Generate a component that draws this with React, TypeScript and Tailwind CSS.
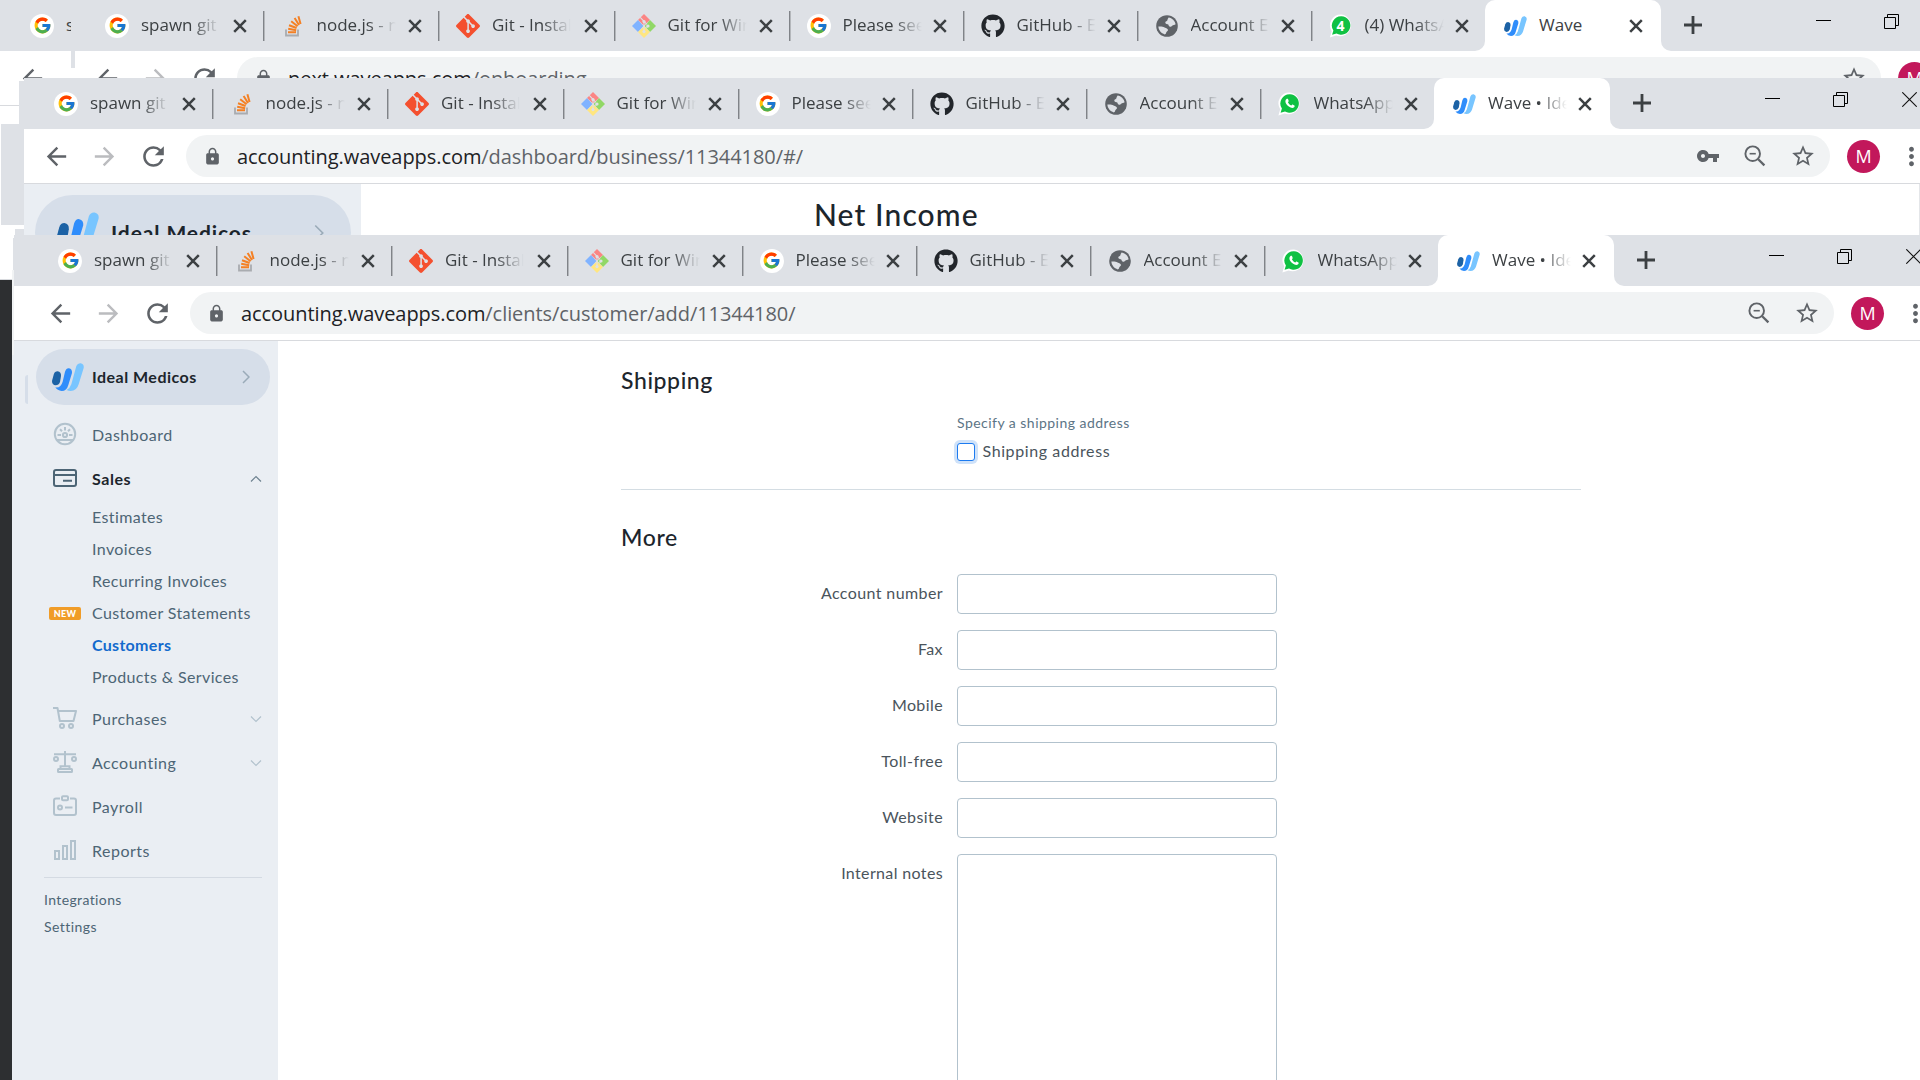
import React from 'react';
import { FcGoogle } from 'react-icons/fc';
import { FaGithub } from 'react-icons/fa';
import { SiGit } from 'react-icons/si';
import {
  MdArrowBack, MdArrowForward, MdLock, MdMoreVert, MdRefresh, MdStarBorder, MdVpnKey,
} from 'react-icons/md';

/* ---------- favicons ---------- */

const GoogleIcon = () => (
  <span className="flex size-6 items-center justify-center rounded-full bg-white"><FcGoogle size={19} /></span>
);

const StackIcon = () => (
  <svg width="18" height="22" viewBox="0 0 18 22" fill="none">
    <path d="M2 14.5V20.5H14V14.5" stroke="#a9acb0" strokeWidth="1.8" />
    <g stroke="#f48024" strokeWidth="2">
      <path d="M4 17.2H12M4.2 13.8L12.2 15.2M5 10.2L12.6 13M7.2 6.2L13.6 11.2M10.6 3L15 10M14.4 1.2L16.6 9" />
    </g>
  </svg>
);

const GitIcon = () => <SiGit size={24} color="#f4502f" />;

const GitWinIcon = () => (
  <svg width="24" height="24" viewBox="0 0 24 24">
    <path d="M12 0L18 6L12 11.4L6 6Z" fill="#fb8584" />
    <path d="M18 6L24 12L18 18L12.6 12Z" fill="#91d866" />
    <path d="M6 6L11.4 12L6 18L0 12Z" fill="#80b3ff" />
    <path d="M12 12.6L18 18L12 24L6 18Z" fill="#ffe680" />
    <path d="M8.2 3.4L15 10.4M12 8V17M15 11.5V14" stroke="#dee1e6" strokeWidth="1.1" />
    <g fill="#dee1e6"><circle cx="12" cy="7.6" r="1.6" /><circle cx="16" cy="12" r="1.6" /><circle cx="12" cy="17.6" r="1.6" /></g>
  </svg>
);

const GithubIcon = () => <FaGithub size={24} color="#22262b" />;

const GlobeIcon = () => (
  <svg width="22" height="22" viewBox="0 0 22 22">
    <circle cx="11" cy="11" r="10.8" fill="#5f6368" />
    <path d="M12.6 2.4C16 3 19 5.600 19.600 9.200C18.600 10.400 17 9.600 16.400 10.600C15.800 12 14.200 12 13.200 11.200C12.400 10.400 12.800 9.400 11.600 9.200C10 9 9 8.400 9.400 7C9.700 6 11.200 6.200 11.400 5.200C11.600 4 12 3.400 12.600 2.400Z" fill="#dee1e6" />
    <path d="M2.400 11.600C4.200 11.400 6.800 11.400 8.600 12.400C10.200 13.200 12 13.400 12 15C12 16.400 10.400 16.400 10.200 17.600C10 18.600 9.800 19.200 8.800 19.400C5.200 18.400 2.600 15.400 2.400 11.600Z" fill="#dee1e6" />
  </svg>
);

const WhatsAppIcon = () => (
  <svg width="23" height="24" viewBox="0 0 23 24">
    <path d="M12 .4A11 11 0 1 1 6.600 21.600L.4 23.400L2.200 17.200A11 11 0 0 1 12 .4Z" fill="#fff" />
    <path d="M12 2.200A9.300 9.300 0 1 1 7 19.600L2.600 20.800L3.900 16.600A9.300 9.300 0 0 1 12 2.200Z" fill="#0fc143" />
    <path d="M8.800 6.800C9.300 6.500 9.800 6.600 10 7.100L10.700 8.900C10.800 9.300 10.100 10 9.900 10.300C10.700 11.900 11.700 12.800 13.300 13.500C13.700 13.200 14.200 12.400 14.600 12.500L16.400 13.400C16.900 13.700 16.600 14.800 16.100 15.300C14.800 16.500 12.600 15.900 10.800 14.600C9 13.200 7.500 11.200 7.400 9.400C7.400 8.300 8.100 7.200 8.800 6.800Z" fill="#fff" />
  </svg>
);

const WhatsAppCountIcon = () => (
  <span className="relative flex size-6 items-center justify-center">
    <svg width="24" height="24" viewBox="0 0 23 24">
      <path d="M12 .4A11 11 0 1 1 6.600 21.600L.4 23.400L2.200 17.200A11 11 0 0 1 12 .4Z" fill="#fff" />
      <path d="M12 2.200A9.300 9.300 0 1 1 7 19.600L2.600 20.800L3.900 16.600A9.300 9.300 0 0 1 12 2.200Z" fill="#0fc143" />
    </svg>
    <span className="absolute inset-0 flex items-center justify-center text-sm leading-none font-bold text-white">4</span>
  </span>
);

const WaveLogo = ({ className }: { className: string }) => (
  <svg className={className} viewBox="0 0 96 84">
    <path d="M5 35Q8 25 17 25Q28 27 27 39L24 57Q20 67 11 67Q0 66 0 54Z" fill="#1c62a5" />
    <path d="M39 26Q43 15 51 16Q61 18 60 30L49 66Q44 84 29 84Q16 83 10 73Q26 76 32 56Z" fill="#2f8dfb" />
    <path d="M73 9Q77 0 86 1Q97 4 95 15L80 64Q74 84 56 84Q50 84 44 81Q54 76 58 64Z" fill="#78c5ff" />
  </svg>
);

/* ---------- browser chrome ---------- */

type Tab = { title: string; icon: React.ReactNode; width: string };

const baseTabs: Tab[] = [
  { title: 'spawn git', icon: <GoogleIcon />, width: 'w-[175.5px]' },
  { title: 'node.js - n', icon: <StackIcon />, width: 'w-[175.5px]' },
  { title: 'Git - Instal', icon: <GitIcon />, width: 'w-[175.5px]' },
  { title: 'Git for Win', icon: <GitWinIcon />, width: 'w-[175px]' },
  { title: 'Please see', icon: <GoogleIcon />, width: 'w-[174px]' },
  { title: 'GitHub - E', icon: <GithubIcon />, width: 'w-[174px]' },
  { title: 'Account E', icon: <GlobeIcon />, width: 'w-[174px]' },
];

const TabTitle = ({ children }: { children: string }) => (
  <span className="mb-0.5 ml-3 w-[79px] overflow-hidden text-[17px] whitespace-nowrap text-[#3c4043] [mask-image:linear-gradient(to_right,#000_64%,transparent)]">
    {children}
  </span>
);

const PlainTitle = ({ children }: { children: string }) => (
  <span className="mb-0.5 ml-3 w-[79px] text-[17px] whitespace-nowrap text-[#3c4043]">{children}</span>
);

const CloseIcon = ({ className }: { className: string }) => (
  <svg className={`size-[22px] shrink-0 ${className}`} viewBox="0 0 22 22" stroke="#3c4043" strokeWidth="2.500">
    <path d="M5.200 5.200L16.800 16.800M16.800 5.200L5.200 16.800" />
  </svg>
);

function TabStrip({ whatsapp, active, pad }: { whatsapp: Tab; active: string; pad: string }) {
  const tabs = [...baseTabs, whatsapp];
  return (
    <div className={`flex h-[51px] shrink-0 bg-[#dee1e6] ${pad}`}>
      {tabs.map((t, i) => (
        <div key={i} className={`flex shrink-0 items-center ${t.width}`}>
          <span className="ml-4 flex size-6 shrink-0 items-center justify-center">{t.icon}</span>
          <TabTitle>{t.title}</TabTitle>
          <CloseIcon className="mr-3 ml-auto" />
          {i < tabs.length - 1 && <span className="h-[30px] w-0.5 border-r border-l border-r-[#b4b7bb] border-l-[#808388]" />}
        </div>
      ))}
      <div className="relative flex w-[175.5px] shrink-0 items-center rounded-t-[10px] bg-white">
        <span className="absolute bottom-0 -left-2.5 size-2.5 bg-white"><span className="block size-full rounded-br-[10px] bg-[#dee1e6]" /></span>
        <span className="absolute -right-2.5 bottom-0 size-2.5 bg-white"><span className="block size-full rounded-bl-[10px] bg-[#dee1e6]" /></span>
        <span className="ml-[18px] flex size-6 shrink-0 items-center justify-center"><WaveLogo className="h-5 w-[23px]" /></span>
        {active.length > 4 ? <TabTitle>{active}</TabTitle> : <PlainTitle>{active}</PlainTitle>}
        <CloseIcon className="mr-[13.500px] ml-auto" />
      </div>
      <svg className="mt-[10px] ml-[17px] size-[30px] shrink-0" viewBox="0 0 30 30" stroke="#3c4043" strokeWidth="2.800">
        <path d="M15 6V24M6 15H24" />
      </svg>
      <span className="mt-5 ml-[108px] h-px w-[15px] shrink-0 bg-black" />
      <svg className="mt-[14px] ml-[53px] shrink-0" width="15" height="15" viewBox="0 0 15 15" fill="none" stroke="#000">
        <path d="M.5 3.500H11.500V14.500H.5ZM3.500 3V.5H14.500V11.500H12" />
      </svg>
      <svg className="mt-[14px] ml-[54px] shrink-0" width="15" height="15" viewBox="0 0 15 15" stroke="#111" strokeWidth="1.100">
        <path d="M.3 .3L14.700 14.700M14.700 .3L.3 14.700" />
      </svg>
    </div>
  );
}

const ZoomOutIcon = () => (
  <svg width="22" height="22" viewBox="0 0 22 22" fill="none" stroke="#5f6368">
    <circle cx="8.700" cy="8.700" r="7.300" strokeWidth="1.900" />
    <path d="M14.200 14.200L20.400 20.400" strokeWidth="2.300" />
    <path d="M5.600 8.700H11.800" strokeWidth="1.600" />
  </svg>
);

function Toolbar({ host, path, pad, withKey, withZoom }: { host: string; path: string; pad: string; withKey?: boolean; withZoom?: boolean }) {
  return (
    <div className={`flex h-[55px] shrink-0 items-center border-b border-[#d8dade] bg-white ${pad}`}>
      <div className="flex w-[149px] shrink-0 items-center gap-[19px] pl-[5px] text-[#5f6368]">
        <MdArrowBack size={29} className="shrink-0" />
        <MdArrowForward size={29} className="shrink-0 text-[#bbbcbf]" />
        <MdRefresh size={31} className="shrink-0" />
      </div>
      <div className="flex h-[42px] w-[1644px] shrink-0 items-center rounded-full bg-[#f1f3f4] text-[#5f6368]">
        <MdLock size={19} className="ml-[17px] shrink-0" />
        <span className="mt-0.5 ml-[15px] text-[20px] tracking-[-0.06px] whitespace-nowrap"><span className="text-[#202124]">{host}</span>{path}</span>
        <div className="mr-[14px] ml-auto flex items-center gap-6">
          {withKey && <MdVpnKey size={24} />}
          {withZoom && <ZoomOutIcon />}
          <MdStarBorder size={26} />
        </div>
      </div>
      <span className="ml-[17px] flex size-[33px] shrink-0 items-center justify-center rounded-full bg-[#c2185b] text-lg text-white">M</span>
      <MdMoreVert size={29} className="ml-[17px] shrink-0 text-[#5f6368]" />
    </div>
  );
}

/* ---------- sidebar ---------- */

const Svg24 = ({ children, dark }: { children: React.ReactNode; dark?: boolean }) => (
  <svg className={dark ? 'size-6 text-[#4d6575]' : 'size-6 text-[#b2c2cd]'} viewBox="0 0 24 24" fill="none" stroke="currentColor" strokeWidth="2">
    {children}
  </svg>
);

const DashboardIcon = () => (
  <Svg24>
    <circle cx="12" cy="12" r="10.200" />
    <path d="M3.500 18H20.500M12 5V8.500M7 7.200L9 9.200M17 7.200L15 9.200M4.500 13H8M16 13H19.500" />
    <circle cx="12" cy="13" r="2.100" />
  </Svg24>
);
const SalesIcon = () => (
  <Svg24 dark><rect x="1" y="4" width="22" height="16" rx="2" /><path d="M1 9H23M10 14.800H19" /></Svg24>
);
const CartIcon = () => (
  <Svg24><path d="M0 2H4.500L6.800 15H20.500L23 5H5.200" strokeLinejoin="round" /><circle cx="9" cy="20" r="2" /><circle cx="18" cy="20" r="2" /></Svg24>
);
const ScaleIcon = () => (
  <Svg24>
    <path d="M1 4.200H23M12 1V16" /><circle cx="3" cy="9" r="2" /><circle cx="21" cy="9" r="2" />
    <path d="M7.500 19V16.200H16.500V19" /><rect x="5" y="19" width="14" height="3" rx=".5" />
  </Svg24>
);
const PayrollIcon = () => (
  <Svg24>
    <path d="M7 4.500H3Q1 4.500 1 6.500V19Q1 21 3 21H21Q23 21 23 19V6.500Q23 4.500 21 4.500H17" />
    <rect x="9" y="2.300" width="6" height="4" rx="1" /><circle cx="7" cy="13.500" r="2" /><path d="M12 13.500H19.500" />
  </Svg24>
);
const ReportsIcon = () => (
  <Svg24><rect x="2" y="13" width="4" height="8" /><rect x="10" y="8" width="4" height="13" /><rect x="18" y="3" width="4" height="18" /></Svg24>
);

const Chevron = ({ className, d }: { className: string; d: string }) => (
  <svg className={className} viewBox="0 0 12 12" fill="none" stroke="currentColor" strokeWidth="1.200"><path d={d} /></svg>
);

function NavItem({ icon, label, expand, active }: { icon: React.ReactNode; label: string; expand?: 'up' | 'down'; active?: boolean }) {
  return (
    <div className={active ? 'flex h-11 items-center pl-[39px] font-bold text-[#1c252c]' : 'flex h-11 items-center pl-[39px] text-[#4d6575]'}>
      <span className="relative -top-px">{icon}</span>
      <span className={active ? 'ml-[15px] tracking-[0.55px]' : 'ml-[15px] tracking-[0.5px]'}>{label}</span>
      {expand === 'up' && <Chevron className="mr-4 ml-auto size-3 text-[#6e8290]" d="M1 8.500L6 3.500L11 8.500" />}
      {expand === 'down' && <Chevron className="mr-4 ml-auto size-3 text-[#b2c2cd]" d="M1 3.500L6 8.500L11 3.500" />}
    </div>
  );
}

const subItems = ['Estimates', 'Invoices', 'Recurring Invoices', 'Customer Statements', 'Customers', 'Products & Services'];

function Sidebar() {
  return (
    <aside className="flex w-[264px] shrink-0 flex-col bg-[#eaeef3] font-[Lato,sans-serif] text-base">
      <div className="mt-2 ml-[22px] flex h-14 w-[234px] shrink-0 items-center rounded-full bg-[#d6dee9] pl-4">
        <WaveLogo className="h-7 w-8" />
        <span className="ml-2 font-bold tracking-[0.48px] text-[#1c252c]">Ideal Medicos</span>
        <svg className="mr-5 ml-auto h-[14px] w-2" viewBox="0 0 8 14" fill="none" stroke="#9aabb8" strokeWidth="1.500"><path d="M1 1L7 7L1 13" /></svg>
      </div>
      <div className="h-2" />
      <NavItem icon={<DashboardIcon />} label="Dashboard" />
      <NavItem icon={<SalesIcon />} label="Sales" expand="up" active />
      <ul className="mb-1">
        {subItems.map((s) => (
          <li key={s} className="flex h-8 items-center">
            <span className="flex w-[78px] shrink-0 pl-[35px]">
              {s === 'Customer Statements' && (
                <span className="flex h-[13px] w-8 items-center justify-center rounded-xs bg-[#f09c28] text-[9px] leading-none font-black tracking-[0.3px] text-white">NEW</span>
              )}
            </span>
            <span className={s === 'Customers' ? 'font-bold tracking-[0.3px] text-[#136acd]' : 'tracking-[0.38px] text-[#4d6575]'}>{s}</span>
          </li>
        ))}
      </ul>
      <NavItem icon={<CartIcon />} label="Purchases" expand="down" />
      <NavItem icon={<ScaleIcon />} label="Accounting" expand="down" />
      <NavItem icon={<PayrollIcon />} label="Payroll" />
      <NavItem icon={<ReportsIcon />} label="Reports" />
      <hr className="mt-1 mr-4 mb-2 ml-[30px] border-[#d4dae2]" />
      <div className="flex h-[27px] items-center pl-[30px] text-sm tracking-[0.38px] text-[#4d6575]">Integrations</div>
      <div className="flex h-[27px] items-center pl-[30px] text-sm tracking-[0.45px] text-[#4d6575]">Settings</div>
    </aside>
  );
}

/* ---------- customer form ---------- */

const fields = ['Account number', 'Fax', 'Mobile', 'Toll-free', 'Website'];

const Heading = ({ children }: { children: string }) => (
  <h2 className="text-[23px] leading-7 font-medium tracking-[0.6px] text-[#1c252c]">{children}</h2>
);

function CustomerForm() {
  return (
    <main className="ml-[343px] w-[960px] shrink-0 pt-[25px] font-[Lato,sans-serif] text-base text-[#4a545c]">
      <Heading>Shipping</Heading>
      <div className="mt-[19px] ml-[336px] flex flex-col">
        <span className="text-sm leading-5 tracking-[0.47px] text-[#5c7485]">Specify a shipping address</span>
        <label className="mt-2 flex h-[22px] items-center tracking-[0.6px]">
          <span className="mr-[7.500px] size-[18px] rounded-[3px] border border-[#1d7bf0] bg-white ring-3 ring-[#cfe2f9]" />
          <span className="-mt-0.5">Shipping address</span>
        </label>
      </div>
      <hr className="mt-[26px] border-[#d4dde3]" />
      <div className="mt-[33px]"><Heading>More</Heading></div>
      <div className="mt-[23px] flex flex-col gap-4">
        {fields.map((f) => (
          <label key={f} className="flex h-10 items-center">
            <span className="-mt-0.5 w-[322px] text-right tracking-[0.4px]">{f}</span>
            <span className="ml-3.5 h-10 w-80 rounded border border-[#b2c2cd] bg-white" />
          </label>
        ))}
        <label className="flex h-60">
          <span className="-mt-px flex h-10 w-[322px] items-center justify-end tracking-[0.36px]">Internal notes</span>
          <span className="ml-3.5 w-80 rounded border border-[#b2c2cd] bg-white" />
        </label>
      </div>
    </main>
  );
}

/* ---------- desktop ---------- */

const whatsapp: Tab = { title: 'WhatsApp', icon: <WhatsAppIcon />, width: 'w-[172.500px]' };
const whatsappUnread: Tab = { title: '(4) WhatsApp', icon: <WhatsAppCountIcon />, width: 'w-[172.500px]' };

export default function App() {
  return (
    <div className="relative h-[1080px] w-[1920px] overflow-hidden bg-[#2d2f31] font-['Open_Sans',sans-serif]">
      {/* rearmost window, visible only along the left edge */}
      <section className="absolute top-0 left-0 flex h-[280px] w-[75px] flex-col overflow-hidden border-b border-[#d8dade] bg-white">
        <div className="flex h-[51px] shrink-0 items-center bg-[#dee1e6] pl-[30px]">
          <GoogleIcon />
          <span className="mb-0.5 ml-3 w-[5.500px] overflow-hidden text-[17px] text-[#3c4043]">s</span>
        </div>
        <div className="flex h-[55px] shrink-0 items-center border-b border-[#d8dade] pl-[18px] text-[#5f6368]"><MdArrowBack size={29} /></div>
        <div className="mt-[18px] h-[101px] w-full border-l border-white bg-[#dee1e6]" />
      </section>

      <div className="absolute top-0 left-[71px] h-[68px] w-1 bg-[#dee1e6]" />
      <section className="absolute top-0 left-[75px] h-[225px] w-[1900px] bg-white">
        <TabStrip whatsapp={whatsappUnread} active="Wave" pad="pl-[14px]" />
        <Toolbar host="next.waveapps.com" path="/onboarding" pad="pl-[13px]" />
      </section>

      <div className="absolute top-[81px] left-[19px] h-[144px] w-[5px] bg-[#dee1e6]" />
      <section className="absolute top-[78px] left-6 flex h-[200px] w-[1896px] flex-col overflow-hidden bg-white">
        <TabStrip whatsapp={whatsapp} active="Wave • Ide" pad="pl-[14px]" />
        <Toolbar host="accounting.waveapps.com" path="/dashboard/business/11344180/#/" pad="pl-[13px]" withKey withZoom />
        <div className="flex grow border-r border-[#e4e6e9]">
          <div className="w-[337px] shrink-0 bg-[#eaeef3] pt-[11px] pl-[11px] font-[Lato,sans-serif]">
            <div className="flex h-[75px] w-[316px] items-center rounded-full bg-[#d6dee9] pr-[27px] pl-[22px]">
              <WaveLogo className="-mt-1 h-[37px] w-[42px]" />
              <span className="ml-3 text-[21px] font-bold tracking-[0.9px] text-[#1c252c]">Ideal Medicos</span>
              <svg className="ml-auto h-[18px] w-2.5" viewBox="0 0 8 14" fill="none" stroke="#9aabb8" strokeWidth="1.300"><path d="M1 1L7 7L1 13" /></svg>
            </div>
          </div>
          <h1 className="mt-3 ml-[453px] font-[Lato,sans-serif] text-[30px] leading-9 font-medium tracking-[1.1px] text-[#1c252c]">Net Income</h1>
        </div>
      </section>

      <div className="absolute top-[229px] left-[15px] h-[9px] w-[9px] bg-[#dee1e6]" />
      <div className="absolute top-[280px] left-3 h-[800px] w-0.5 bg-[#eaeef3]" />
      <div className="absolute top-[238px] left-[13px] h-12 w-px bg-[#dee1e6]" />
      <div className="absolute top-[270px] left-3 h-[85px] w-0.5 bg-[#f1f3f4]" />
      <section className="absolute top-[235px] left-[14px] flex h-[845px] w-[1906px] flex-col overflow-hidden bg-white">
        <TabStrip whatsapp={whatsapp} active="Wave • Ide" pad="pl-[28px]" />
        <Toolbar host="accounting.waveapps.com" path="/clients/customer/add/11344180/" pad="pl-[27px]" withZoom />
        <div className="relative flex grow overflow-hidden">
          <Sidebar />
          <span className="absolute top-[34px] left-[11px] h-[29px] w-[3px] rounded-l-full bg-[#d6dee9]" />
          <CustomerForm />
        </div>
      </section>
    </div>
  );
}
